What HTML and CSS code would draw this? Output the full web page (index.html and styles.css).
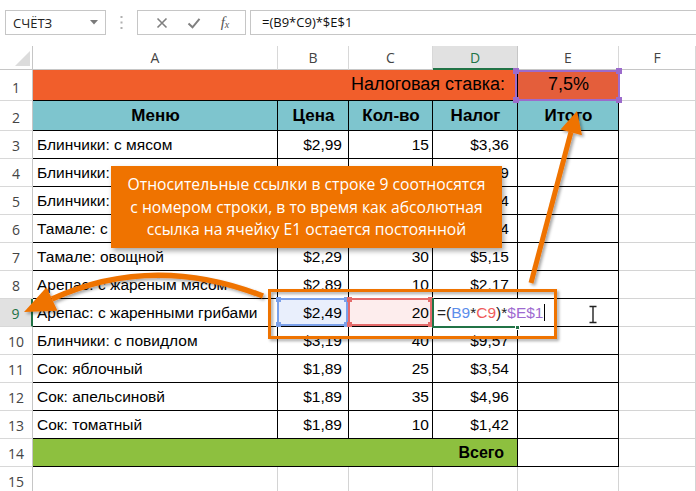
FILE: index.html
```html
<!DOCTYPE html>
<html lang="ru">
<head>
<meta charset="utf-8">
<link rel="stylesheet" href="styles.css">
</head>
<body>
<div class="app">
  <div class="fbar">
    <div class="namebox"><span>СЧЁТЗ</span><svg class="dd" width="8" height="5" viewBox="0 0 8 5"><path d="M0 0h8L4 4.5z" fill="#7a7a7a"/></svg></div>
    <div class="grip"><svg width="3" height="13" viewBox="0 0 3 13"><rect x="0.5" y="0" width="2" height="2" fill="#b0b0b0"/><rect x="0.5" y="5.5" width="2" height="2" fill="#b0b0b0"/><rect x="0.5" y="11" width="2" height="2" fill="#b0b0b0"/></svg></div>
    <div class="btns">
      <svg width="12" height="12" viewBox="0 0 12 12"><path d="M1.5 1.5l9 9M10.5 1.5l-9 9" stroke="#808080" stroke-width="1.6" fill="none"/></svg>
      <svg width="14" height="12" viewBox="0 0 14 12"><path d="M1.5 6.5l4 3.8 7-8.5" stroke="#808080" stroke-width="2" fill="none"/></svg>
      <span class="fx"><i>f</i><sub>x</sub></span>
    </div>
    <div class="formula">=(B9*C9)*$E$1</div>
  </div>

  <div class="sheet">
    <div class="corner"><svg width="33" height="24" viewBox="0 0 33 24"><path d="M15 20H30V5z" fill="#dcdcdc"/></svg></div>
    <div class="ch">A</div><div class="ch">B</div><div class="ch">C</div><div class="ch ch-sel">D</div><div class="ch">E</div><div class="ch">F</div>

    <div class="rh">1</div>
    <div class="c title">Налоговая ставка:</div>
    <div class="c rate">7,5%<span class="psel"><i class="k k1"></i><i class="k k2"></i><i class="k k3"></i><i class="k k4"></i></span></div>
    <div class="c"></div>

    <div class="rh">2</div>
    <div class="c t hd">Меню</div><div class="c t hd">Цена</div><div class="c t hd">Кол-во</div><div class="c t hd">Налог</div><div class="c t hd">Итого</div><div class="c"></div>

    <div class="rh">3</div>
    <div class="c t">Блинчики: с мясом</div><div class="c t nb">$2,99</div><div class="c t nc">15</div><div class="c t nd">$3,36</div><div class="c t"></div><div class="c"></div>

    <div class="rh">4</div>
    <div class="c t">Блинчики:</div><div class="c t nb"></div><div class="c t nc"></div><div class="c t nd">$4,49</div><div class="c t"></div><div class="c"></div>

    <div class="rh">5</div>
    <div class="c t">Блинчики:</div><div class="c t nb"></div><div class="c t nc"></div><div class="c t nd">$3,54</div><div class="c t"></div><div class="c"></div>

    <div class="rh">6</div>
    <div class="c t">Тамале: с</div><div class="c t nb"></div><div class="c t nc"></div><div class="c t nd">$3,44</div><div class="c t"></div><div class="c"></div>

    <div class="rh">7</div>
    <div class="c t">Тамале: овощной</div><div class="c t nb">$2,29</div><div class="c t nc">30</div><div class="c t nd">$5,15</div><div class="c t"></div><div class="c"></div>

    <div class="rh">8</div>
    <div class="c t">Арепас: с жареным мясом</div><div class="c t nb">$2,89</div><div class="c t nc">10</div><div class="c t nd">$2,17</div><div class="c t"></div><div class="c"></div>

    <div class="rh rh-sel">9</div>
    <div class="c t">Арепас: с жаренными грибами</div>
    <div class="c t nb refb">$2,49<span class="hb"><i class="k k1"></i><i class="k k2"></i><i class="k k3"></i><i class="k k4"></i></span></div>
    <div class="c t nc refc">20<span class="hc"><i class="k k1"></i><i class="k k2"></i><i class="k k3"></i><i class="k k4"></i></span></div>
    <div class="c t edit"><span class="ftext">=(<b class="fb">B9</b>*<b class="fc">C9</b>)*<b class="fe">$E$1</b><i class="caret"></i></span><span class="gl"></span><span class="gb"></span><span class="gk"></span></div>
    <div class="c t"></div><div class="c"></div>

    <div class="rh">10</div>
    <div class="c t">Блинчики: с повидлом</div><div class="c t nb">$3,19</div><div class="c t nc">40</div><div class="c t nd">$9,57</div><div class="c t"></div><div class="c"></div>

    <div class="rh">11</div>
    <div class="c t">Сок: яблочный</div><div class="c t nb">$1,89</div><div class="c t nc">25</div><div class="c t nd">$3,54</div><div class="c t"></div><div class="c"></div>

    <div class="rh">12</div>
    <div class="c t">Сок: апельсиновй</div><div class="c t nb">$1,89</div><div class="c t nc">35</div><div class="c t nd">$4,96</div><div class="c t"></div><div class="c"></div>

    <div class="rh">13</div>
    <div class="c t">Сок: томатный</div><div class="c t nb">$1,89</div><div class="c t nc">10</div><div class="c t nd">$1,42</div><div class="c t"></div><div class="c"></div>

    <div class="rh">14</div>
    <div class="c total">Всего</div><div class="c t"></div><div class="c"></div>

    <div class="rh">15</div>
    <div class="c"></div><div class="c"></div><div class="c"></div><div class="c"></div><div class="c"></div><div class="c"></div>
  </div>

  <div class="callout">Относительные ссылки в строке 9 соотносятся<br>с номером строки, в то время как абсолютная<br>ссылка на ячейку E1 остается постоянной</div>

  <svg class="overlay" width="696" height="491" viewBox="0 0 696 491">
    <defs>
      <filter id="sh" x="-20%" y="-20%" width="140%" height="140%">
        <feDropShadow dx="2" dy="2" stdDeviation="1.5" flood-color="#000" flood-opacity="0.35"/>
      </filter>
    </defs>
    <g filter="url(#sh)">
      <rect x="269.5" y="290.5" width="286" height="47" fill="none" stroke="#ef7300" stroke-width="3"/>
      <path d="M531 283L571 132" stroke="#ef7300" stroke-width="5" fill="none"/>
      <path d="M577 111L560.5 129.5L582 135.2z" fill="#ef7300"/>
      <path d="M263 296Q152 253 52 299" stroke="#ef7300" stroke-width="5.5" fill="none"/>
      <path d="M24 312L46.5 287.2L57.5 310.8z" fill="#ef7300"/>
    </g>
    <path d="M589.5 306.5h7M593 306.5v16M589.5 322.5h7" stroke="#222" stroke-width="1.4" fill="none"/>
  </svg>
</div>
</body>
</html>
```

FILE: styles.css
```css
* { box-sizing: border-box; margin: 0; padding: 0; }
html, body { background: #fff; }
body { width: 696px; height: 491px; overflow: hidden; font-family: "Liberation Sans", Arial, sans-serif; color: #000; }
.app { position: relative; width: 696px; height: 491px; overflow: hidden; }

/* formula bar */
.fbar { display: flex; align-items: flex-start; height: 46px; padding: 10px 0 0 5px; }
.namebox { width: 101px; height: 25px; border: 1px solid #c6c6c6; display: flex; align-items: center; justify-content: space-between; padding: 0 7px 0 7px; font-family: "Open Sans", sans-serif; font-size: 13px; color: #222; }
.grip { width: 31px; height: 25px; display: flex; align-items: center; justify-content: center; }
.btns { width: 109px; height: 25px; border: 1px solid #c6c6c6; display: flex; align-items: center; justify-content: space-around; padding: 0 6px 0 8px; }
.fx { font-family: "Liberation Serif", serif; font-size: 15px; color: #555; }
.fx sub { font-size: 10px; font-style: italic; vertical-align: -1px; }
.formula { flex: 1; margin-left: 4px; height: 25px; border: 1px solid #c6c6c6; border-right: none; padding-left: 11px; font-family: "Open Sans", sans-serif; font-size: 13px; line-height: 23px; color: #111; }

/* sheet */
.sheet { display: grid; grid-template-columns: 33px 245px 71px 84px 85px 101px 77px; grid-template-rows: 24px 31px 30px repeat(13, 28px); }
.corner { border-right: 1px solid #c6c6c6; border-bottom: 1px solid #c6c6c6; }
.corner svg { display: block; }
.ch { display: flex; align-items: center; justify-content: center; border-right: 1px solid #d8d8d8; border-bottom: 1px solid #c6c6c6; font-family: "Open Sans", sans-serif; font-size: 14px; color: #444; }
.ch-sel { background: #e1e1e1; color: #217346; border-bottom: 2px solid #217346; border-right-color: #c6c6c6; }
.rh { display: flex; align-items: flex-end; justify-content: center; padding-bottom: 3px; border-right: 1px solid #c6c6c6; border-bottom: 1px solid #d8d8d8; font-family: "Open Sans", sans-serif; font-size: 14px; color: #444; }
.rh-sel { background: #e1e1e1; color: #217346; border-right: 2px solid #217346; }

.c { display: flex; align-items: flex-end; padding: 0 3px 4px 4px; border-right: 1px solid #d4d4d4; border-bottom: 1px solid #d4d4d4; font-size: 15.5px; white-space: nowrap; overflow: hidden; }
.t { border-right-color: #000; border-bottom-color: #000; }
.nb, .nc, .nd { justify-content: flex-end; }
.nb { padding-right: 6px; }
.nc { padding-right: 3px; }
.nd { padding-right: 8px; }

.title { grid-column: span 4; background: #f15e2b; justify-content: flex-end; padding-right: 12px; font-size: 18px; border-right-color: #000; border-bottom-color: #000; padding-bottom: 5px; }
.rate { position: relative; overflow: visible; background: #e45e3b; justify-content: center; font-size: 18px; border-right-color: #000; border-bottom-color: #000; padding-bottom: 5px; }
.psel { position: absolute; left: -3px; top: 0; right: -2px; bottom: -1px; border: 2px solid #9c6bcc; }
.psel .k { position: absolute; width: 6px; height: 6px; background: #9c6bcc; }
.k1 { left: -4px; top: -4px; }
.k2 { right: -4px; top: -4px; }
.k3 { left: -4px; bottom: -4px; }
.k4 { right: -4px; bottom: -4px; }

.hd { background: #7ec5ce; justify-content: center; font-weight: bold; font-size: 17px; padding-bottom: 4px; }
.total { grid-column: span 4; background: #8dc03f; justify-content: flex-end; padding-right: 13px; font-weight: bold; font-size: 16px; border-right-color: #000; border-bottom-color: #000; }

.refb, .refc { position: relative; overflow: visible; }
.refb { background: #e9effc; }
.refc { background: #fdeded; }
.hb, .hc { position: absolute; left: -1px; top: -1px; right: 0; bottom: 0; border: 2px solid #7aa0ea; }
.hc { border-color: #e46b6b; }
.hb .k, .hc .k { position: absolute; width: 5px; height: 5px; background: #7aa0ea; }
.hc .k { background: #e46b6b; }
.hb .k1, .hc .k1 { left: -3px; top: -3px; }
.hb .k2, .hc .k2 { right: -3px; top: -3px; }
.hb .k3, .hc .k3 { left: -3px; bottom: -3px; }
.hb .k4, .hc .k4 { right: -3px; bottom: -3px; }

.edit { position: relative; z-index: 1; overflow: visible; border-right-color: transparent; padding-left: 4px; }
.ftext { position: relative; background: #fff; font-size: 15.5px; color: #222; padding-right: 2px; }
.ftext b { font-weight: normal; }
.fb { color: #5b8eeb; }
.fc { color: #ef5b5b; }
.fe { color: #9e6ad0; }
.caret { display: inline-block; width: 1px; height: 17px; background: #000; vertical-align: -3px; margin-left: 1px; }
.gl { position: absolute; left: -1px; top: -1px; width: 2px; bottom: -2px; background: #217346; }
.gb { position: absolute; left: -1px; right: 0; bottom: -2px; height: 2px; background: #217346; }
.gk { position: absolute; right: -3px; bottom: -4px; width: 5px; height: 5px; background: #217346; border: 1px solid #fff; }

/* overlay content */
.callout { position: absolute; left: 111px; top: 166px; width: 391px; height: 82px; background: #ef7300; color: #fff; font-family: "Open Sans", sans-serif; font-size: 15.7px; line-height: 22.5px; text-align: center; padding-top: 7px; box-shadow: 2px 3px 5px rgba(0,0,0,0.35); }
.overlay { position: absolute; left: 0; top: 0; pointer-events: none; }
```
